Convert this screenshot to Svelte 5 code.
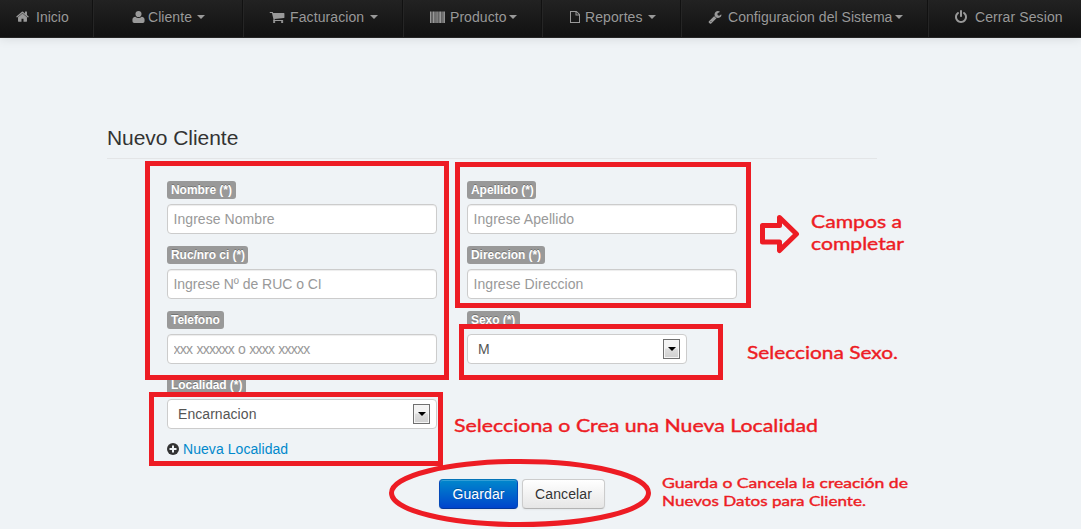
<script>
  const menu = [
    { name: 'inicio', text: 'Inicio', icon: 'home', caret: false },
    { name: 'cliente', text: 'Cliente', icon: 'user', caret: true },
    { name: 'facturacion', text: 'Facturacion', icon: 'cart', caret: true },
    { name: 'producto', text: 'Producto', icon: 'barcode', caret: true },
    { name: 'reportes', text: 'Reportes', icon: 'file', caret: true },
    { name: 'configuracion', text: 'Configuracion del Sistema', icon: 'wrench', caret: true },
    { name: 'cerrar', text: 'Cerrar Sesion', icon: 'power', caret: false }
  ];
  const paths = {
    home: 'M1472 992v480q0 26-19 45t-45 19h-384v-384h-256v384h-384q-26 0-45-19t-19-45v-480q0-1 .5-3t.5-3l575-474 575 474q1 2 1 6zm223-69l-62 74q-8 9-21 11h-3q-13 0-21-7l-692-577-692 577q-12 8-24 7-13-2-21-11l-62-74q-8-10-7-23.5t11-21.5l719-599q32-26 76-26t76 26l244 204v-195q0-14 9-23t23-9h192q14 0 23 9t9 23v408l219 182q10 8 11 21.5t-7 23.5z',
    user: 'M1620 1200v250q0 214-204 214h-1040q-204 0-204-214v-250q0-280 350-340q150 160 374 160t374-160q350 60 350 340zM1260 500q0 170-100 290t-264 120-264-120-100-290 100-271 264-112 264 112 100 271z',
    cart: 'M704 1536q0 52-38 90t-90 38-90-38-38-90 38-90 90-38 90 38 38 90zm896 0q0 52-38 90t-90 38-90-38-38-90 38-90 90-38 90 38 38 90zm128-1088v512q0 24-16.5 42.5t-40.5 21.5l-1044 122q13 60 13 70 0 16-24 64h920q26 0 45 19t19 45-19 45-45 19h-1024q-26 0-45-19t-19-45q0-11 8-31.5t16-36 21.5-40 15.5-29.5l-177-823h-204q-26 0-45-19t-19-45 19-45 45-19h256q16 0 28.5 6.5t19.5 15.5 13 24.5 8 26 5.5 29.5 4.5 26h1201q26 0 45 19t19 45z',
    barcode: 'M0 192h170v1472H0zM220 192h70v1472h-70zM340 192h220v1472H340zM620 192h80v1472h-80zM750 192h180v1472H750zM980 192h70v1472h-70zM1100 192h250v1472h-250zM1400 192h70v1472h-70zM1510 192h130v1472h-130zM1680 192h112v1472h-112z',
    file: 'M256 128h850l430 430v1106H256zM384 256v1280h1024V704H960V256zM1088 276v300h300z',
    wrench: 'M448 1472q0-26-19-45t-45-19-45 19-19 45 19 45 45 19 45-19 19-45zm644-420l-682 682q-37 37-90 37-52 0-91-37l-106-108q-38-36-38-90 0-53 38-91l681-681q39 98 114.500 173.500t173.500 114.500zm634-435q0 39-23 106-47 134-164.500 217.500t-258.500 83.500q-185 0-316.500-131.500t-131.500-316.500 131.500-316.500 316.500-131.500q58 0 121.500 16.500t107.500 46.500q16 11 16 28t-16 28l-293 169v224l193 107q5-3 79-48.500t135.500-81 70.500-35.500q15 0 23.500 10t8.500 25z',
    power: 'M1664 896q0 156-61 298t-164 245-245 164-298 61-298-61-245-164-164-245-61-298q0-182 80.5-343t226.5-270q43-32 95.5-25t83.5 50q32 42 24.5 94.5t-49.5 84.5q-98 74-151.5 181t-53.5 228q0 104 40.5 198.5t109.5 163.5 163.5 109.5 198.5 40.5 198.5-40.5 163.5-109.5 109.5-163.5 40.5-198.5q0-121-53.5-228t-151.5-181q-42-32-49.5-84.5t24.5-94.5q31-43 84-50t95 25q146 109 226.5 270t80.5 343zm-640-768v640q0 52-38 90t-90 38-90-38-38-90v-640q0-52 38-90t90-38 90 38 38 90z'
  };
</script>

<div class="page">
  <nav>
    {#each menu as item}
      <a class="item {item.name}">
        <svg class="icon" viewBox={item.icon === 'home' ? '60 180 1672 1400' : '0 0 1792 1792'} preserveAspectRatio="none"><path fill-rule="evenodd" d={paths[item.icon]} /></svg>
        <span class="text">{item.text}</span>
        {#if item.caret}<i class="caret"></i>{/if}
      </a>
    {/each}
  </nav>

  <main>
    <h1>Nuevo Cliente</h1>
    <form>
      <div class="column">
        <div class="field"><span class="label w69">Nombre (*)</span><input placeholder="Ingrese Nombre" /></div>
        <div class="field"><span class="label w81">Ruc/nro ci (*)</span><input class="ruc" placeholder="Ingrese Nº de RUC o CI" /></div>
        <div class="field"><span class="label w57">Telefono</span><input class="phone" placeholder="xxx xxxxxx o xxxx xxxxx" /></div>
        <div class="field">
          <span class="label w79">Localidad (*)</span>
          <div class="select"><span>Encarnacion</span><b class="drop"></b></div>
        </div>
        <a class="add">
          <svg viewBox="0 0 12 12"><circle cx="6" cy="6" r="6" /><path d="M6 2.500v7M2.500 6h7" stroke="#eff3f6" stroke-width="2" /></svg>
          <span>Nueva Localidad</span>
        </a>
      </div>
      <div class="column">
        <div class="field"><span class="label w69">Apellido (*)</span><input placeholder="Ingrese Apellido" /></div>
        <div class="field"><span class="label w78">Direccion (*)</span><input placeholder="Ingrese Direccion" /></div>
        <div class="field">
          <span class="label w53">Sexo (*)</span>
          <div class="select short"><span>M</span><b class="drop"></b></div>
        </div>
      </div>
    </form>
    <div class="actions">
      <button class="primary">Guardar</button>
      <button class="plain">Cancelar</button>
    </div>
  </main>

  <svg class="notes" width="1081" height="529" viewBox="0 0 1081 529">
    <g class="marks">
      <rect x="147.5" y="163.5" width="299" height="214" />
      <rect x="457.5" y="164.5" width="291" height="141" />
      <rect x="461.5" y="326.5" width="259" height="51" />
      <rect x="151.5" y="394.5" width="289" height="69" />
      <ellipse cx="520" cy="493" rx="128.5" ry="31.5" />
      <path stroke-linejoin="round" d="M762.5 225.5h17v-8L796.5 234l-17 16.500v-8.500h-17z" />
    </g>
    <g class="captions">
      <text x="811" y="228" textLength="91" lengthAdjust="spacingAndGlyphs">Campos a</text>
      <text x="811" y="250" textLength="93" lengthAdjust="spacingAndGlyphs">completar</text>
      <text x="747" y="359" textLength="151" lengthAdjust="spacingAndGlyphs">Selecciona Sexo.</text>
      <text x="454" y="432" textLength="364" lengthAdjust="spacingAndGlyphs">Selecciona o Crea una Nueva Localidad</text>
      <text class="small" x="662" y="488" textLength="246" lengthAdjust="spacingAndGlyphs">Guarda o Cancela la creación de</text>
      <text class="small" x="662" y="506" textLength="204" lengthAdjust="spacingAndGlyphs">Nuevos Datos para Cliente.</text>
    </g>
  </svg>
</div>

<style>
  :global(body) { margin: 0; background: #eff3f6; overflow: hidden; }
  .page { position: relative; width: 1081px; height: 529px; overflow: hidden; background: #eff3f6; font: 14px/20px "Liberation Sans", Arial, sans-serif; color: #333; }
  nav { box-sizing: border-box; height: 38px; display: grid; grid-template-columns: 94px 150px 160px 139px 139px 247px 1fr; background: linear-gradient(#222, #111); border-bottom: 1px solid #252525; box-shadow: 0 1px 10px rgba(0, 0, 0, .1); }
  .item { box-sizing: border-box; display: flex; align-items: flex-start; color: #999; border-right: 1px solid #252525; box-shadow: inset -1px 0 #111; white-space: nowrap; text-shadow: 0 -1px 0 rgba(0, 0, 0, .25); }
  .item:last-child { border: 0; box-shadow: none; }
  .icon { width: 14px; height: 14px; margin-top: 10px; flex: none; fill: #999; }
  .text { padding-top: 7px; flex: none; }
  .caret { width: 0; height: 0; margin-top: 15px; border: 4px solid transparent; border-top-color: #999; border-bottom: 0; flex: none; }
  .inicio { padding-left: 16px; }
  .inicio .icon { width: 13px; height: 11px; margin-top: 11px; }
  .inicio .text { margin-left: 7px; }
  .cliente { padding-left: 37px; }
  .cliente .icon { width: 15px; }
  .cliente .text { margin-left: 2px; width: 49px; letter-spacing: .06px; }
  .facturacion { padding-left: 25px; }
  .facturacion .icon { width: 16px; }
  .facturacion .text { margin-left: 5px; width: 80px; letter-spacing: .1px; }
  .producto { padding-left: 26px; }
  .producto .icon { width: 15px; }
  .producto .text { margin-left: 5px; width: 59px; letter-spacing: .06px; }
  .reportes { padding-left: 25px; }
  .reportes .text { margin-left: 3px; width: 63px; letter-spacing: .1px; }
  .configuracion { padding-left: 26px; }
  .configuracion .text { margin-left: 6px; width: 167px; letter-spacing: .04px; }
  .cerrar { padding-left: 25px; }
  .cerrar .text { margin-left: 7px; letter-spacing: .1px; }
  main { width: 770px; padding: 90px 0 0 107px; }
  h1 { margin: 0; height: 30px; border-bottom: 1px solid #e3e5e7; font: 21px/20px "Liberation Sans", Arial, sans-serif; letter-spacing: -.05px; }
  form { display: flex; gap: 30px; padding: 22px 0 0 60px; height: 298px; box-sizing: border-box; }
  .column { width: 270px; }
  .field { height: 65px; }
  .label { display: block; box-sizing: border-box; height: 18px; margin-bottom: 5px; padding-left: 4px; border-radius: 3px; background: #999; color: #fff; font-size: 12px; font-weight: bold; line-height: 18px; letter-spacing: -.05px; text-shadow: 0 -1px 0 rgba(0, 0, 0, .25); white-space: nowrap; }
  .w53 { width: 53px; }
  .w57 { width: 57px; }
  .w69 { width: 69px; }
  .w78 { width: 78px; }
  .w79 { width: 79px; }
  .w81 { width: 81px; }
  input, .select { display: block; box-sizing: border-box; width: 270px; height: 30px; margin: 0; border: 1px solid #ccc; border-radius: 4px; background: #fff; color: #555; font: 14px/20px "Liberation Sans", Arial, sans-serif; }
  input { padding: 4px 6px 4px 5.500px; box-shadow: inset 0 1px 1px rgba(0, 0, 0, .075); outline: none; letter-spacing: .06px; }
  input::placeholder { color: #999; opacity: 1; }
  .ruc { letter-spacing: -.04px; }
  .phone { letter-spacing: -.75px; word-spacing: 1px; }
  .select { display: flex; align-items: center; justify-content: space-between; padding: 0 6px 0 10px; letter-spacing: .06px; }
  .short { width: 220px; }
  .drop { box-sizing: border-box; width: 17px; height: 20px; border: 1px solid #707070; background: linear-gradient(#f3f3f3 0 45%, #dedede 50%, #cfcfcf); box-shadow: inset 0 0 0 1px #f5f5f5; display: grid; place-items: center; }
  .drop::after { content: ''; border: 4px solid transparent; border-top-color: #000; border-bottom: 0; }
  .add { display: flex; align-items: center; gap: 4px; height: 20px; margin-top: -2px; color: #08c; letter-spacing: .06px; }
  .add svg { width: 12px; height: 12px; fill: #333; }
  .actions { display: flex; gap: 4px; padding-left: 332px; margin-top: 22px; }
  button { box-sizing: border-box; height: 30px; padding: 0; border: 1px solid #ccc; border-radius: 4px; font: 14px/20px "Liberation Sans", Arial, sans-serif; letter-spacing: .1px; }
  .primary { width: 79px; color: #fff; background: linear-gradient(#08c, #04c); border-color: #0474b8 #0449b8 #03379b; text-shadow: 0 -1px 0 rgba(0, 0, 0, .25); box-shadow: inset 0 1px 0 rgba(255, 255, 255, .2), 0 1px 2px rgba(0, 0, 0, .05); }
  .plain { width: 83px; color: #333; background: linear-gradient(#fff, #e6e6e6); border-bottom-color: #b3b3b3; text-shadow: 0 1px 1px rgba(255, 255, 255, .75); box-shadow: 0 1px 2px rgba(0, 0, 0, .05); }
  .notes { position: absolute; left: 0; top: 0; pointer-events: none; }
  .marks { fill: none; stroke: #ed1c24; stroke-width: 5; }
  .captions { fill: #ed1c24; font: 400 18px Lato, sans-serif; stroke: #ed1c24; stroke-width: .4; }
  .small { font-size: 14px; }
</style>
